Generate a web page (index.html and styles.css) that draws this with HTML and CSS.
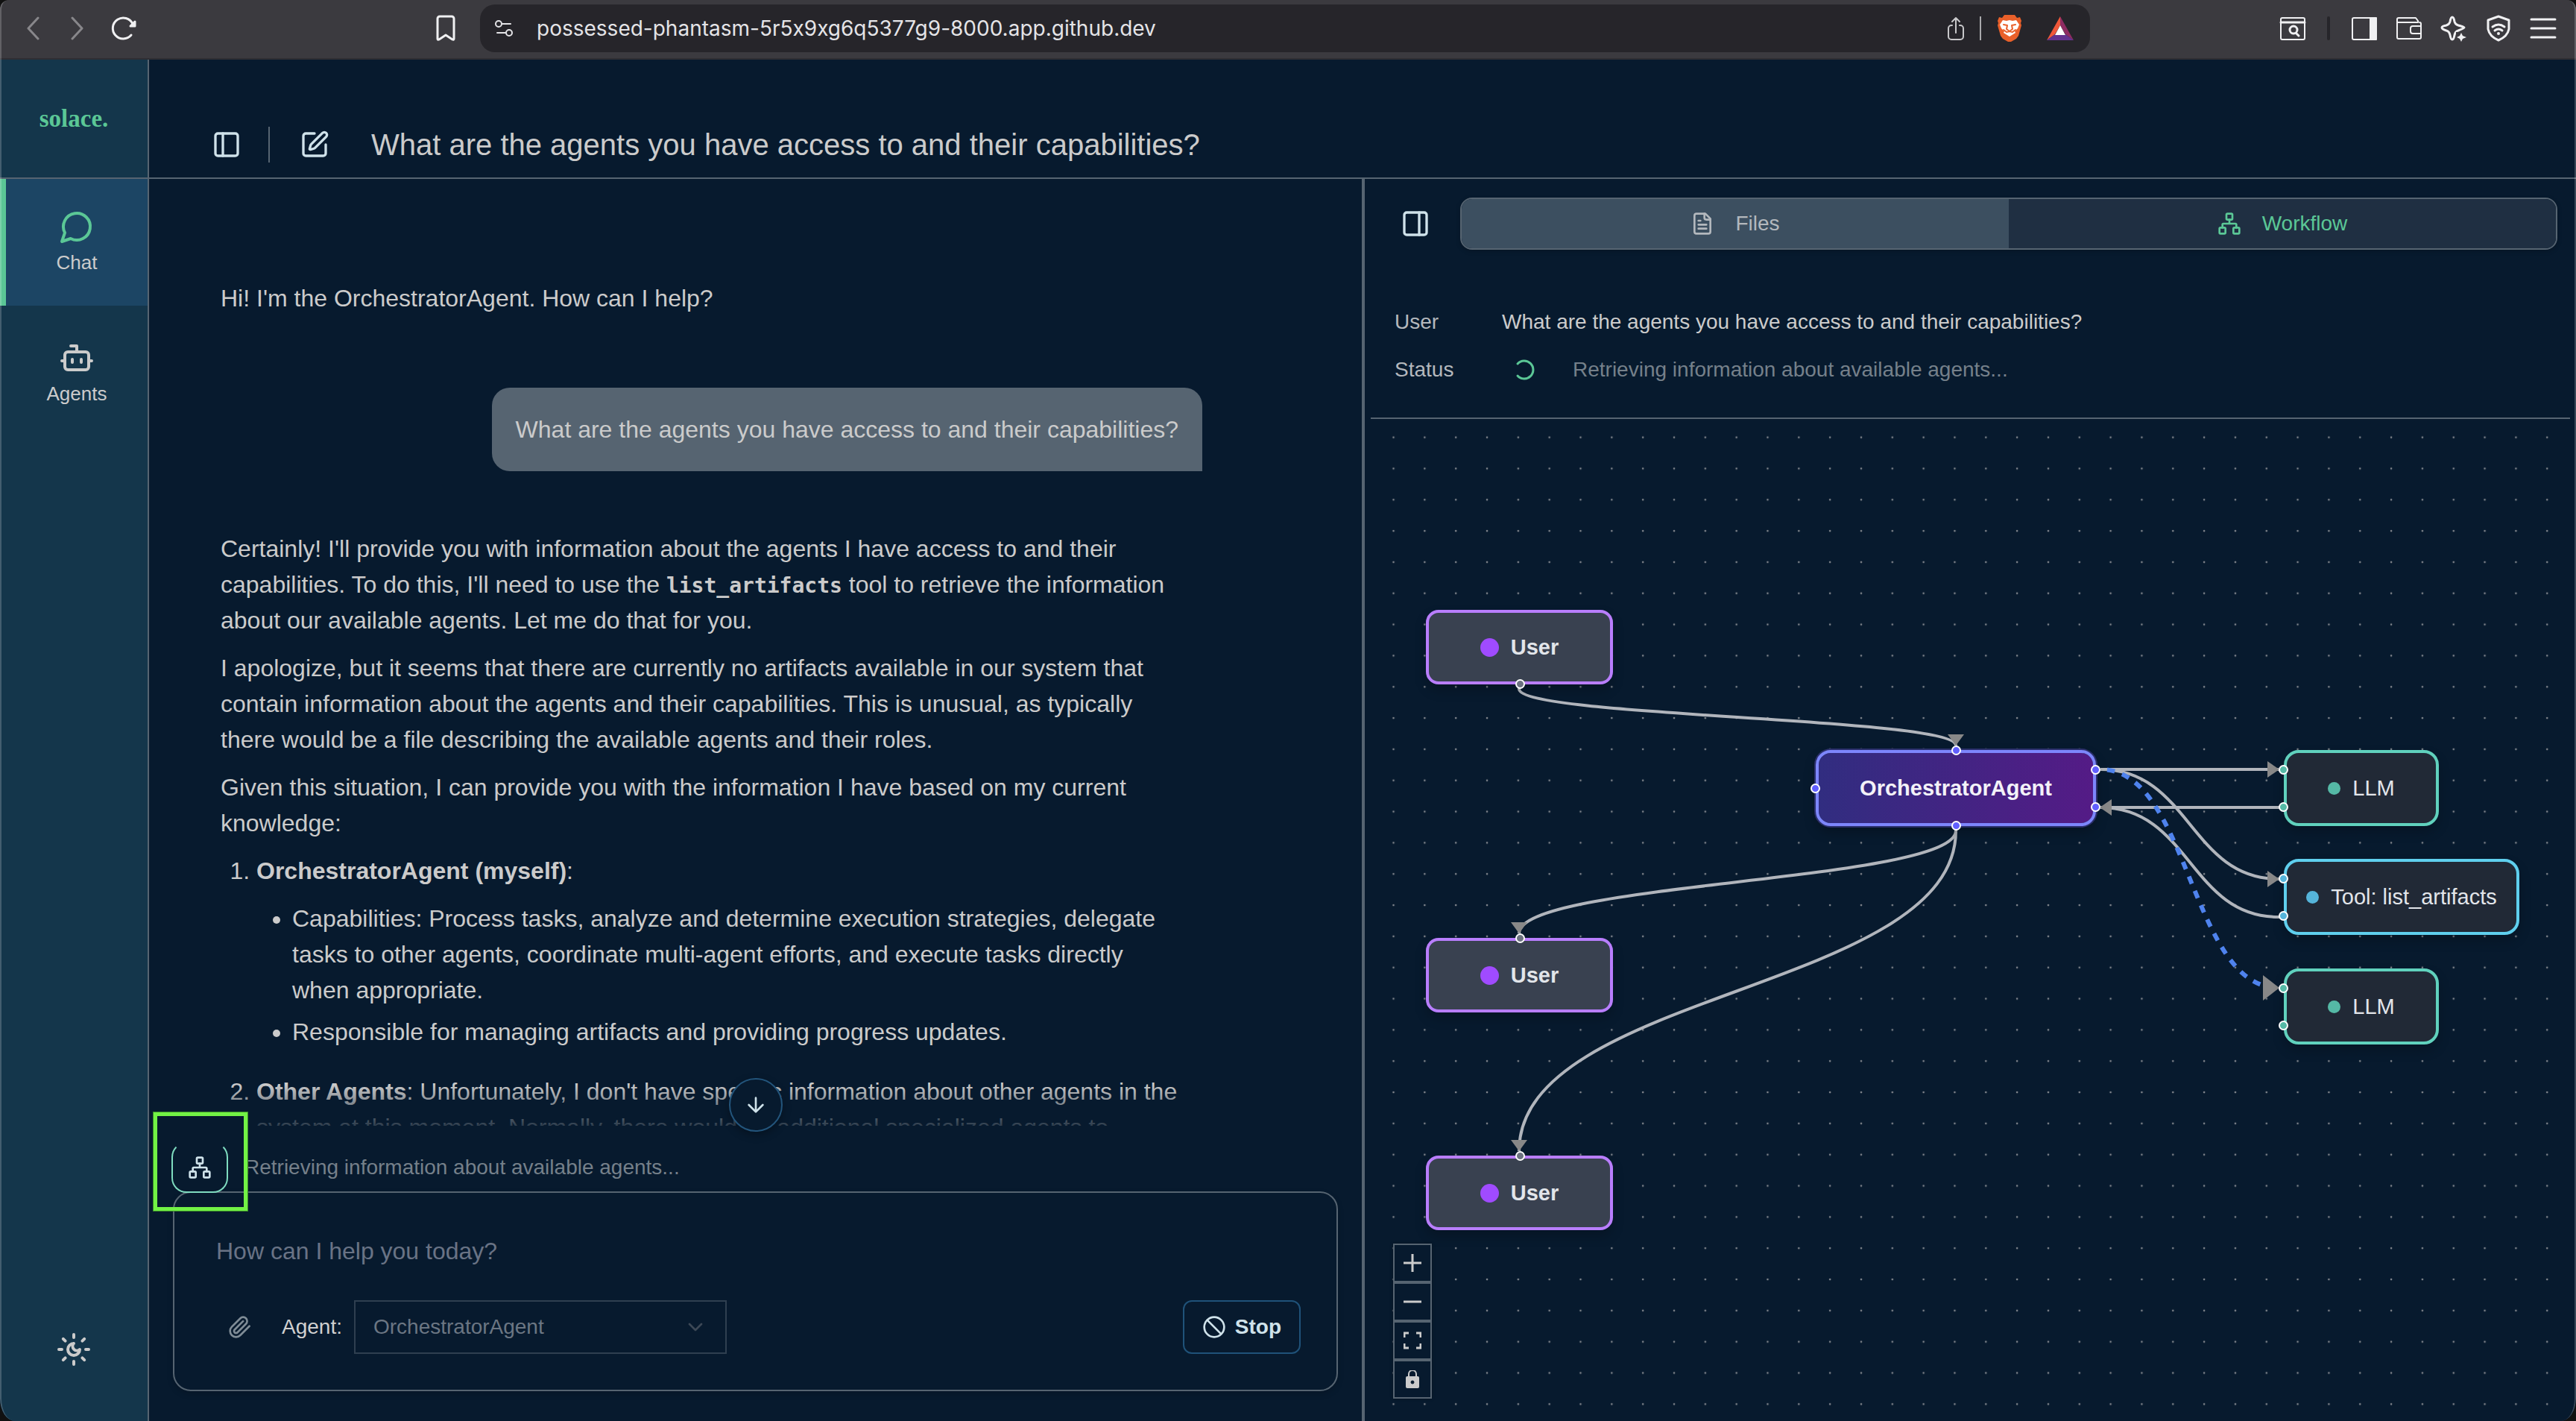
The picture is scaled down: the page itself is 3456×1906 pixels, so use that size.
FILE: index.html
```html
<!DOCTYPE html>
<html lang="en">
<head>
<meta charset="utf-8">
<title>What are the agents you have access to and their capabilities?</title>
<link rel="stylesheet" href="styles.css">
</head>
<body>
<svg class="sprite" aria-hidden="true">
  <symbol id="i-network" viewBox="0 0 24 24"><rect x="16" y="16" width="6" height="6" rx="1"/><rect x="2" y="16" width="6" height="6" rx="1"/><rect x="9" y="2" width="6" height="6" rx="1"/><path d="M5 16v-3a1 1 0 0 1 1-1h12a1 1 0 0 1 1 1v3M12 12V8"/></symbol>
</svg>
<div class="window">
  <header class="browser">
    <nav class="browser-nav">
      <button class="plain dim" aria-label="Back"><svg class="ic32" viewBox="0 0 32 32"><path d="M23 2 10 16l13 14" stroke-width="3"/></svg></button>
      <button class="plain dim" aria-label="Forward"><svg class="ic32" viewBox="0 0 32 32"><path d="m9 2 13 14L9 30" stroke-width="3"/></svg></button>
      <button class="plain" aria-label="Reload"><svg class="ic36" viewBox="0 0 36 36"><path d="M28 27A14 14 0 1 1 30 12" stroke-width="3"/><path d="M33 9v6h-6z" fill="currentColor" stroke-width="3"/></svg></button>
      <button class="plain bookmark" aria-label="Bookmark"><svg class="ic36" viewBox="0 0 36 36"><path d="M7 5a3 3 0 0 1 3-3h16a3 3 0 0 1 3 3v27q0 2-2 1l-9-6-9 6q-2 1-2-1z" stroke-width="3"/></svg></button>
    </nav>
    <div class="urlbar">
      <svg class="ic36" viewBox="0 0 36 36"><circle cx="11" cy="12" r="4" stroke-width="2"/><path d="M15 12h12M9 24h11" stroke-width="2"/><circle cx="25" cy="24" r="4" stroke-width="2"/></svg>
      <span class="url">possessed-phantasm-5r5x9xg6q5377g9-8000.app.github.dev</span>
      <button class="plain share" aria-label="Share"><svg class="ic36" viewBox="0 0 36 36"><path d="M13 14h-1a4 4 0 0 0-4 4v11a4 4 0 0 0 4 4h12a4 4 0 0 0 4-4V18a4 4 0 0 0-4-4h-1M18 24V5M13 9l5-5 5 5" stroke-width="2"/></svg></button>
      <span class="url-sep"></span>
      <svg class="ic36 brave" viewBox="0 0 36 36" role="img" aria-label="Brave Shields"><path fill="#e9602a" stroke="none" d="M11 0h14l3 4 4-1 2 5-1 3 1 3-4 14-3 4-7 4h-4l-7-4-3-4L2 14l1-3-1-3 2-5 4 1z"/><path fill="#fff" stroke="none" d="M9 7l5 1 4-1 4 1 5-1 4 6-2 5-4 4 1 2-8 5-8-5 1-2-4-4-2-5z"/><path d="M10 13l5 1-1 5 4 3 4-3-1-5 5-1M10 20l4 3 4-1 4 1 4-3" stroke="#e9602a" stroke-width="2"/></svg>
      <svg class="ic36 bat" viewBox="0 0 36 36" role="img" aria-label="Rewards"><g stroke="none"><path fill="#f0583a" d="M18 2 0 34l11-8 7-12z"/><path fill="#8f2c62" d="M18 2v12l7 12 11 8z"/><path fill="#63338f" d="M0 34h36l-11-8H11z"/><path fill="#fff" d="m18 14-7 13h14z"/></g></svg>
    </div>
    <div class="browser-tools">
      <button class="plain" aria-label="Search in page"><svg class="ic36" viewBox="0 0 36 36"><rect x="2" y="4" width="32" height="29" rx="2" stroke-width="2"/><path d="M2 10h32M23 25l3 3" stroke-width="3"/><circle cx="19" cy="20" r="5" stroke-width="3"/></svg></button>
      <span class="tool-sep"></span>
      <button class="plain" aria-label="Sidebar"><svg class="ic36" viewBox="0 0 36 36"><rect x="2" y="4" width="32" height="29" rx="2" stroke-width="2"/><path fill="currentColor" d="M26 4h8v29h-8z"/></svg></button>
      <button class="plain" aria-label="Wallet"><svg class="ic36" viewBox="0 0 36 36"><path d="M2 6q0-2 2-2h23l3 4v2H2M2 6v24q0 2 2 2h28q2 0 2-2V12q0-2-2-2M34 15H23q-3 0-3 3v4q0 3 3 3h11" stroke-width="2"/></svg></button>
      <button class="plain" aria-label="Assistant"><svg class="ic36" viewBox="0 0 36 36"><path d="M16 3q2 0 3 6 1 4 5 5 8 2 8 3t-8 4q-4 1-5 6-1 6-3 6t-3-6q-1-5-5-6-6-2-6-4t6-3q4-1 5-5 1-6 3-6z" stroke-width="3"/><path fill="#3b3a3f" stroke="none" d="M21 23h15v13H21z"/><path fill="currentColor" stroke="none" d="m28 24 2 4 5 2-5 2-2 4-2-4-4-2 4-2z"/></svg></button>
      <button class="plain" aria-label="VPN"><svg class="ic36" viewBox="0 0 36 36"><path d="m18 2 14 5v12q-2 10-14 15Q6 29 4 19V7z" stroke-width="3"/><path d="M10 16q8-6 16 0M13 21q5-4 10 0" stroke-width="3"/><circle cx="18" cy="25" r="1" fill="currentColor"/></svg></button>
      <button class="plain" aria-label="Menu"><svg class="ic36" viewBox="0 0 36 36"><path d="M2 6h32M2 18h32M2 30h32" stroke-width="3"/></svg></button>
    </div>
  </header>

  <div class="app">
    <aside class="sidebar">
      <div class="brand"><a class="logo" href="#">solace.</a></div>
      <nav class="side-nav">
        <a class="side-item active" href="#"><svg class="ic48" viewBox="0 0 24 24"><path d="M7.900 20A9 9 0 1 0 4 16.100L2 22Z"/></svg><span>Chat</span></a>
        <a class="side-item" href="#"><svg class="ic48" viewBox="0 0 24 24"><path d="M12 8V4H8"/><rect width="16" height="12" x="4" y="8" rx="2"/><path d="M2 14h2M20 14h2M15 13v2M9 13v2"/></svg><span>Agents</span></a>
      </nav>
      <button class="plain theme" aria-label="Toggle theme"><svg class="ic48" viewBox="0 0 24 24"><path d="M12 8a2.830 2.830 0 0 0 4 4 4 4 0 1 1-4-4M12 2v2M12 20v2m-7.100-17.100 1.400 1.400m11.400 11.400 1.400 1.400M2 12h2M20 12h2M6.300 17.700l-1.400 1.400M19.100 4.900l-1.400 1.400"/></svg></button>
    </aside>

    <main class="main">
      <header class="page-head">
        <button class="ghost" aria-label="Toggle sessions"><svg class="ic40" viewBox="0 0 24 24"><rect width="18" height="18" x="3" y="3" rx="2"/><path d="M9 3v18"/></svg></button>
        <span class="head-sep"></span>
        <button class="ghost" aria-label="New chat"><svg class="ic40" viewBox="0 0 24 24"><path d="M12 3H5a2 2 0 0 0-2 2v14a2 2 0 0 0 2 2h14a2 2 0 0 0 2-2v-7"/><path d="M18.375 2.625a1 1 0 0 1 3 3l-9.013 9.014a2 2 0 0 1-.853.505l-2.873.84a.5.5 0 0 1-.62-.62l.84-2.873a2 2 0 0 1 .506-.852z"/></svg></button>
        <h1>What are the agents you have access to and their capabilities?</h1>
      </header>

      <div class="panels">
        <section class="chat">
          <div class="messages">
            <p class="greeting">Hi! I'm the OrchestratorAgent. How can I help?</p>
            <div class="bubble">What are the agents you have access to and their capabilities?</div>
            <div class="reply">
              <p>Certainly! I'll provide you with information about the agents I have access to and their capabilities. To do this, I'll need to use the <code>list_artifacts</code> tool to retrieve the information about our available agents. Let me do that for you.</p>
              <p>I apologize, but it seems that there are currently no artifacts available in our system that contain information about the agents and their capabilities. This is unusual, as typically there would be a file describing the available agents and their roles.</p>
              <p>Given this situation, I can provide you with the information I have based on my current knowledge:</p>
              <ol>
                <li><strong>OrchestratorAgent (myself)</strong>:
                  <ul>
                    <li>Capabilities: Process tasks, analyze and determine execution strategies, delegate tasks to other agents, coordinate multi-agent efforts, and execute tasks directly when appropriate.</li>
                    <li>Responsible for managing artifacts and providing progress updates.</li>
                  </ul>
                </li>
                <li><strong>Other Agents</strong>: Unfortunately, I don't have specific information about other agents in the system at this moment. Normally, there would be additional specialized agents to</li>
              </ol>
            </div>
            <div class="fade"></div>
          </div>

          <div class="composer">
            <button class="scroll-down" aria-label="Scroll to bottom"><svg class="ic32" viewBox="0 0 24 24"><path d="M12 5v14M19 12l-7 7-7-7"/></svg></button>
            <div class="progress">
              <button class="flow-btn" aria-label="View workflow"><svg class="ic32"><use href="#i-network"/></svg></button>
              <span>Retrieving information about available agents...</span>
              <div class="highlight"></div>
            </div>
            <form class="card">
              <textarea rows="1" aria-label="Message" placeholder="How can I help you today?"></textarea>
              <div class="card-row">
                <button type="button" class="plain clip" aria-label="Attach file"><svg class="ic32" viewBox="0 0 24 24"><path d="m21.440 11.050-9.190 9.190a6 6 0 0 1-8.490-8.490l8.570-8.570A4 4 0 1 1 18 8.840l-8.590 8.570a2 2 0 0 1-2.830-2.830l8.490-8.480"/></svg></button>
                <label for="agent">Agent:</label>
                <div class="select">
                  <select id="agent" disabled><option>OrchestratorAgent</option></select>
                  <svg class="ic32" viewBox="0 0 24 24"><path d="m6 9 6 6 6-6"/></svg>
                </div>
                <button type="button" class="stop"><svg class="ic32" viewBox="0 0 24 24"><circle cx="12" cy="12" r="10"/><path d="m5 5 14 14"/></svg>Stop</button>
              </div>
            </form>
          </div>
        </section>

        <div class="divider"></div>

        <section class="side-panel">
          <div class="tab-row">
            <button class="ghost" aria-label="Collapse panel"><svg class="ic40" viewBox="0 0 24 24"><rect width="18" height="18" x="3" y="3" rx="2"/><path d="M15 3v18"/></svg></button>
            <div class="tabs" role="tablist">
              <button class="tab" role="tab"><svg class="ic32" viewBox="0 0 24 24"><path d="M15 2H6a2 2 0 0 0-2 2v16a2 2 0 0 0 2 2h12a2 2 0 0 0 2-2V7Z"/><path d="M14 2v4a2 2 0 0 0 2 2h4M10 9H8M16 13H8M16 17H8"/></svg>Files</button>
              <button class="tab current" role="tab" aria-selected="true"><svg class="ic32"><use href="#i-network"/></svg>Workflow</button>
            </div>
          </div>
          <dl class="details">
            <dt>User</dt>
            <dd>What are the agents you have access to and their capabilities?</dd>
            <dt>Status</dt>
            <dd class="working"><svg class="ic32" viewBox="0 0 32 32"><path d="M6 8A12 12 0 1 1 6 24" stroke-width="3"/></svg>Retrieving information about available agents...</dd>
          </dl>
          <div class="canvas">
            <svg class="edges" aria-hidden="true">
              <defs><pattern id="dots" x="9.550" y="3.650" width="41.830" height="41.830" patternUnits="userSpaceOnUse"><circle cx="21" cy="21" r="1.300" fill="#81868d" stroke="none"/></pattern></defs>
              <rect width="100%" height="100%" fill="url(#dots)" stroke="none"/>
              <g stroke="#b1b5bc" stroke-width="4" stroke-linecap="butt">
                <path d="M199 356V362C199 400 785 400 785 438"/>
                <path d="M785 546V552C785 621 199 621 199 690"/>
                <path d="M785 552C785 767 199 767 199 982"/>
                <path d="M979 470H1218M979 521H1224"/>
                <path d="M979 470C1099 470 1099 617 1218 617"/>
                <path d="M979 521C1099 521 1099 668 1218 668H1224"/>
                <path class="running" d="M979 470C1099 470 1099 763 1218 763"/>
              </g>
              <g fill="#888" stroke="none">
                <path d="M774 423h22l-11 15zM188 675h22l-11 15zM188 967h22l-11 15z"/>
                <path d="M1203 459v22l16-11zM1203 606v22l16-11zM994 510v22l-16-11zM1197 746v34l22-17z"/>
              </g>
            </svg>

            <div class="node user n-user1"><i class="dot"></i>User<i class="port b"></i></div>
            <div class="node user n-user2"><i class="dot"></i>User<i class="port t"></i></div>
            <div class="node user n-user3"><i class="dot"></i>User<i class="port t"></i></div>
            <div class="node agent n-agent">OrchestratorAgent<i class="port t"></i><i class="port b"></i><i class="port l mid"></i><i class="port r up"></i><i class="port r down"></i></div>
            <div class="node llm n-llm1"><i class="dot"></i>LLM<i class="port l up"></i><i class="port l down"></i></div>
            <div class="node tool n-tool"><i class="dot"></i>Tool: list_artifacts<i class="port l up"></i><i class="port l down"></i></div>
            <div class="node llm n-llm2"><i class="dot"></i>LLM<i class="port l up"></i><i class="port l down"></i></div>

            <div class="controls">
              <button aria-label="Zoom in"><svg viewBox="0 0 24 24"><path d="M12 0v24M0 12h24" stroke-width="3"/></svg></button>
              <button aria-label="Zoom out"><svg viewBox="0 0 24 24"><path d="M0 12h24" stroke-width="3"/></svg></button>
              <button aria-label="Fit view"><svg viewBox="0 0 24 24"><path d="M1 8V2h6M17 2h6v6M23 16v6h-6M7 22H1v-6" stroke-width="3"/></svg></button>
              <button aria-label="Lock"><svg viewBox="0 0 24 24"><path d="M7 9V5a5 5 0 0 1 10 0v4" stroke-width="2"/><path fill="currentColor" stroke="none" d="M5 8h14q2 0 2 2v12q0 2-2 2H5q-2 0-2-2V10q0-2 2-2z"/><circle cx="12" cy="16" r="2" fill="#071a2e" stroke="#071a2e" stroke-width="1"/></svg></button>
            </div>
          </div>
        </section>
      </div>
    </main>
  </div>
</div>
</body>
</html>
```
FILE: styles.css
```css
:root {
  --bg: #071a2e;
  --line: #566471;
  --text: #cbcbcb;
  --muted: #75808a;
  --green: #5bc796;
  --bright: #cfe2ea;
}
* { box-sizing: border-box; }
body {
  margin: 0;
  background: #111;
  color: var(--text);
  font: 28px/40px "Liberation Sans", Arial, sans-serif;
}
h1, p, dl, dd, ol, ul { margin: 0; }
button, select, textarea { font: inherit; color: inherit; }
button { padding: 0; border: 0; background: none; cursor: pointer; }
a { color: inherit; text-decoration: none; }
svg { display: block; flex: none; fill: none; stroke: currentColor; stroke-width: 2; stroke-linecap: round; stroke-linejoin: round; }
.sprite { position: absolute; width: 0; height: 0; }
.ic32 { width: 32px; height: 32px; }
.ic36 { width: 36px; height: 36px; }
.ic40 { width: 40px; height: 40px; }
.ic48 { width: 48px; height: 48px; }

.window {
  position: relative;
  display: flex;
  flex-direction: column;
  height: 100vh;
  overflow: hidden;
  border-radius: 12px 12px 20px 20px / 12px 12px 30px 30px;
}
.window::after {
  content: "";
  position: absolute;
  inset: 0;
  border: solid rgba(255, 255, 255, .2);
  border-width: 0 2px;
  border-radius: inherit;
  pointer-events: none;
}

/* Browser toolbar */
.browser {
  display: grid;
  grid-template-columns: 644fr 2160fr 652fr;
  align-items: center;
  flex: none;
  height: 80px;
  padding-bottom: 2px;
  border-bottom: 2px solid #2f2e33;
  background: #3b3a3f;
  color: #f0f0f2;
}
.browser-nav { display: flex; align-items: center; gap: 28px; padding: 0 28px; }
.dim { color: #88878b; }
.bookmark { margin-left: auto; }
.urlbar {
  display: flex;
  align-items: center;
  height: 64px;
  padding: 0 22px 0 14px;
  border-radius: 20px;
  background: #26252a;
  color: #e4e4e7;
}
.url { flex: 1; margin-left: 26px; font: 28px/40px Inter, sans-serif; font-feature-settings: "calt" 0; }
.share { color: #c8c8ca; }
.url-sep { width: 2px; height: 32px; margin: 0 20px 0 14px; background: #a9a9ac; }
.bat { margin-left: 32px; }
.browser-tools { display: flex; justify-content: flex-end; align-items: center; gap: 24px; padding-right: 26px; }
.tool-sep { width: 4px; height: 32px; margin: 0 4px; border-radius: 2px; background: #26252a; }

/* Application shell */
.app { display: flex; flex: 1; min-height: 0; background: var(--bg); }
.sidebar {
  display: flex;
  flex-direction: column;
  flex: none;
  width: 200px;
  border-right: 2px solid var(--line);
  background: #14364b;
}
.brand { display: flex; justify-content: center; align-items: center; height: 160px; border-bottom: 2px solid var(--line); }
.logo { color: var(--green); font: bold 33px/40px "Liberation Serif", serif; }
.side-nav { display: flex; flex-direction: column; gap: 6px; }
.side-item {
  display: flex;
  flex-direction: column;
  align-items: center;
  gap: 8px;
  height: 170px;
  padding-top: 40px;
  border-left: 8px solid transparent;
  font-size: 26px;
  line-height: 32px;
}
.side-item.active { border-color: var(--green); background: #1c4564; }
.side-item.active svg { color: var(--green); }
.theme { margin: auto auto 72px; }

.main { display: flex; flex-direction: column; flex: 1; min-width: 0; }
.page-head {
  display: flex;
  align-items: flex-end;
  height: 160px;
  padding: 0 68px 20px;
  border-bottom: 2px solid var(--line);
}
.ghost { display: grid; place-items: center; flex: none; width: 72px; height: 48px; color: var(--bright); }
.head-sep { width: 2px; height: 48px; margin: 0 24px 0 20px; background: var(--line); }
.page-head h1 { margin-left: 40px; font-size: 40px; font-weight: 400; line-height: 48px; }
.panels { display: grid; grid-template-columns: minmax(0, 1627fr) 4px minmax(0, 1625fr); flex: 1; min-height: 0; }
.divider { background: var(--line); }

/* Conversation */
.chat { display: flex; flex-direction: column; min-height: 0; }
.messages {
  position: relative;
  display: flex;
  flex-direction: column;
  flex: 1;
  min-height: 0;
  overflow: hidden;
  padding: 136px 214px 0 96px;
  font-size: 32px;
  line-height: 48px;
}
.bubble { align-self: flex-end; margin: 96px 0 80px; padding: 32px; border-radius: 24px 24px 0 24px; background: #566471; }
.reply { max-width: 1292px; }
.reply p { margin-bottom: 16px; }
.reply code { font: bold 28px/40px "DejaVu Sans Mono", monospace; }
.reply ol, .reply ul { padding-left: 48px; }
.reply ul { margin: 16px 0 32px; list-style: disc; }
.reply ul li + li { margin-top: 8px; }
.fade { position: absolute; inset: auto 0 0; height: 56px; background: linear-gradient(transparent, rgba(7, 26, 46, .8)); }

.composer { position: relative; flex: none; padding: 22px 32px 40px; }
.scroll-down {
  position: absolute;
  top: -64px;
  left: 50%;
  display: grid;
  place-items: center;
  width: 72px;
  height: 72px;
  margin-left: -36px;
  border: 2px solid #23557c;
  border-radius: 50%;
  background: var(--bg);
  box-shadow: 0 4px 12px rgba(0, 0, 0, .3);
  color: var(--bright);
}
.progress { position: relative; display: flex; align-items: center; gap: 22px; height: 68px; margin: 0 0 -2px -2px; color: var(--muted); }
.flow-btn {
  display: grid;
  place-items: center;
  width: 76px;
  height: 68px;
  border: 2px solid #7fdcc0;
  border-top-color: transparent;
  border-radius: 20px;
  background: var(--bg);
  color: var(--bright);
}
.highlight { position: absolute; top: -40px; left: -24px; width: 126px; height: 132px; border: 5px solid #72f245; outline: 1px solid #3c8a2b; }
.card { padding: 54px 48px 48px 56px; border: 2px solid var(--line); border-radius: 24px; box-shadow: 0 4px 8px rgba(0, 0, 0, .15); }
.card textarea {
  display: block;
  width: 100%;
  height: 48px;
  margin-bottom: 42px;
  padding: 0;
  border: 0;
  background: none;
  font-size: 32px;
  line-height: 48px;
  resize: none;
  overflow: hidden;
}
.card textarea::placeholder { color: #697385; }
.card-row { display: flex; align-items: center; height: 72px; }
.clip { margin: 0 40px 0 16px; color: #7f8c96; }
.card-row label { margin-right: 16px; color: #d0d0d0; }
.select { display: grid; align-items: center; width: 500px; height: 72px; }
.select > * { grid-area: 1 / 1; }
.select select {
  width: 100%;
  height: 100%;
  padding: 0 24px;
  appearance: none;
  border: 2px solid #2f3f50;
  border-radius: 0;
  background: none;
  color: #6b7683;
  opacity: 1;
}
.select svg { justify-self: end; margin-right: 26px; color: #3c4856; }
.stop {
  display: flex;
  align-items: center;
  gap: 12px;
  height: 72px;
  margin-left: auto;
  padding: 0 24px;
  border: 2px solid #1f5279;
  border-radius: 12px;
  color: var(--bright);
  font-weight: 700;
}

/* Workflow panel */
.side-panel { display: flex; flex-direction: column; min-height: 0; padding: 0 8px; }
.tab-row { display: flex; align-items: center; gap: 24px; padding: 25px 17px 0 24px; }
.tabs { display: flex; flex: 1; height: 70px; overflow: hidden; border: 2px solid var(--line); border-radius: 16px; box-shadow: 0 2px 6px rgba(0, 0, 0, .2); }
.tab { display: flex; justify-content: center; align-items: center; gap: 28px; flex: 1; background: #3c4f60; color: #b3b8bd; }
.tab.current { background: #1f2f42; color: var(--green); }
.details {
  display: grid;
  grid-template-columns: 144px 1fr;
  row-gap: 24px;
  padding: 77px 32px 44px;
  border-bottom: 2px solid var(--line);
}
.details dt { color: #b4b8bd; }
.working { display: flex; align-items: center; gap: 48px; padding-left: 15px; color: var(--muted); }
.working svg { color: var(--green); }

.canvas { position: relative; flex: 1; min-height: 0; overflow: hidden; }
.edges { position: absolute; inset: 0; width: 100%; height: 100%; }
.running { stroke: #4f83ee; stroke-width: 6; stroke-dasharray: 10.460; stroke-dashoffset: 12; }
.node {
  position: absolute;
  display: flex;
  justify-content: center;
  align-items: center;
  gap: 16px;
  height: 102px;
  border: 4px solid;
  border-radius: 20px;
  background: #212936;
  box-shadow: 0 8px 16px rgba(0, 0, 0, .2);
  color: #e2e5ea;
  font-size: 29px;
}
.node .dot { width: 17px; height: 17px; border-radius: 50%; background: var(--c); }
.port { position: absolute; width: 13px; height: 13px; border: 2px solid #fff; border-radius: 50%; background: var(--c); }
.port.t, .port.b { left: 50%; margin-left: -6px; }
.port.t { top: -10px; }
.port.b { bottom: -10px; }
.port.l { left: -11px; }
.port.r { right: -10px; }
.port.up { top: 16px; }
.port.mid { top: 41px; }
.port.down { bottom: 15px; }
.user { --c: #6b7280; width: 251px; height: 100px; border-color: #b97eff; border-radius: 17px; background: #394150; font-weight: 700; }
.user .dot { width: 25px; height: 25px; background: #a04bff; }
.agent { --c: #615fff; width: 376px; border-color: #7d86fc; background: linear-gradient(90deg, #312d80, #541b86) padding-box; box-shadow: 0 0 0 2px #2b2f6b, 0 8px 16px rgba(0, 0, 0, .25); color: #f3f2f8; font-weight: 700; }
.llm { --c: #55b9a6; width: 208px; border-color: #60d1bd; }
.tool { --c: #55b4da; width: 316px; border-color: #5fcfee; }
.n-user1 { left: 74px; top: 256px; }
.n-user2 { left: 74px; top: 696px; }
.n-user3 { left: 74px; top: 988px; }
.n-agent { left: 597px; top: 444px; }
.n-llm1 { left: 1225px; top: 444px; }
.n-tool { left: 1225px; top: 590px; }
.n-llm2 { left: 1225px; top: 737px; }

.controls { position: absolute; left: 30px; bottom: 30px; display: flex; flex-direction: column; box-shadow: 0 0 4px rgba(0, 0, 0, .3); }
.controls button { display: grid; place-items: center; width: 52px; height: 52px; border: 2px solid var(--line); background: var(--bg); }
.controls svg { width: 24px; height: 24px; stroke-linecap: butt; stroke-linejoin: miter; }
```
